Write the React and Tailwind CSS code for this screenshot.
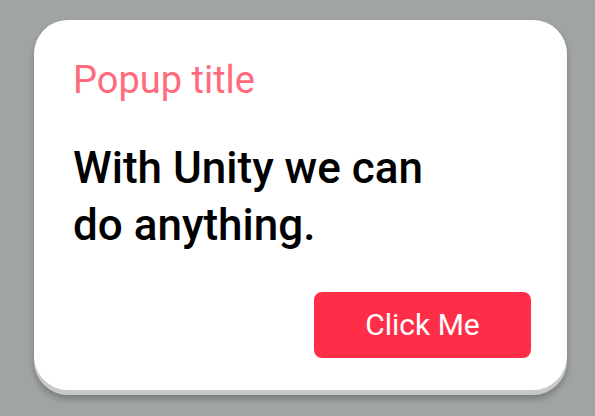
export default function App() {
  return (
    <div
      className="w-[595px] h-[416px] bg-[#a0a4a4] pt-[20px] pl-[34px] overflow-hidden"
      style={{ fontFamily: "Roboto, 'Liberation Sans', sans-serif" }}
    >
      <div className="w-[533px] rounded-[34px] bg-[#c9c9c9] pb-[5px] shadow-[0_4px_6px_rgba(0,0,0,0.25)]">
        <div className="rounded-[34px] bg-white pt-[42px] pl-[39px] pr-[36px] pb-[32px] flex flex-col">
          <div className="text-[38px] leading-[37px] text-[#ff6b7d] font-normal">Popup title</div>
          <div className="mt-[41px] text-[44px] leading-[57px] font-medium text-black">
            With Unity we can
            <br />
            do anything.
          </div>
          <div className="mt-[38px] flex justify-end">
            <button className="w-[217px] h-[66px] rounded-[8px] bg-[#ff2e48] text-white text-[30px] leading-none flex items-center justify-center">
              Click Me
            </button>
          </div>
        </div>
      </div>
    </div>
  );
}
